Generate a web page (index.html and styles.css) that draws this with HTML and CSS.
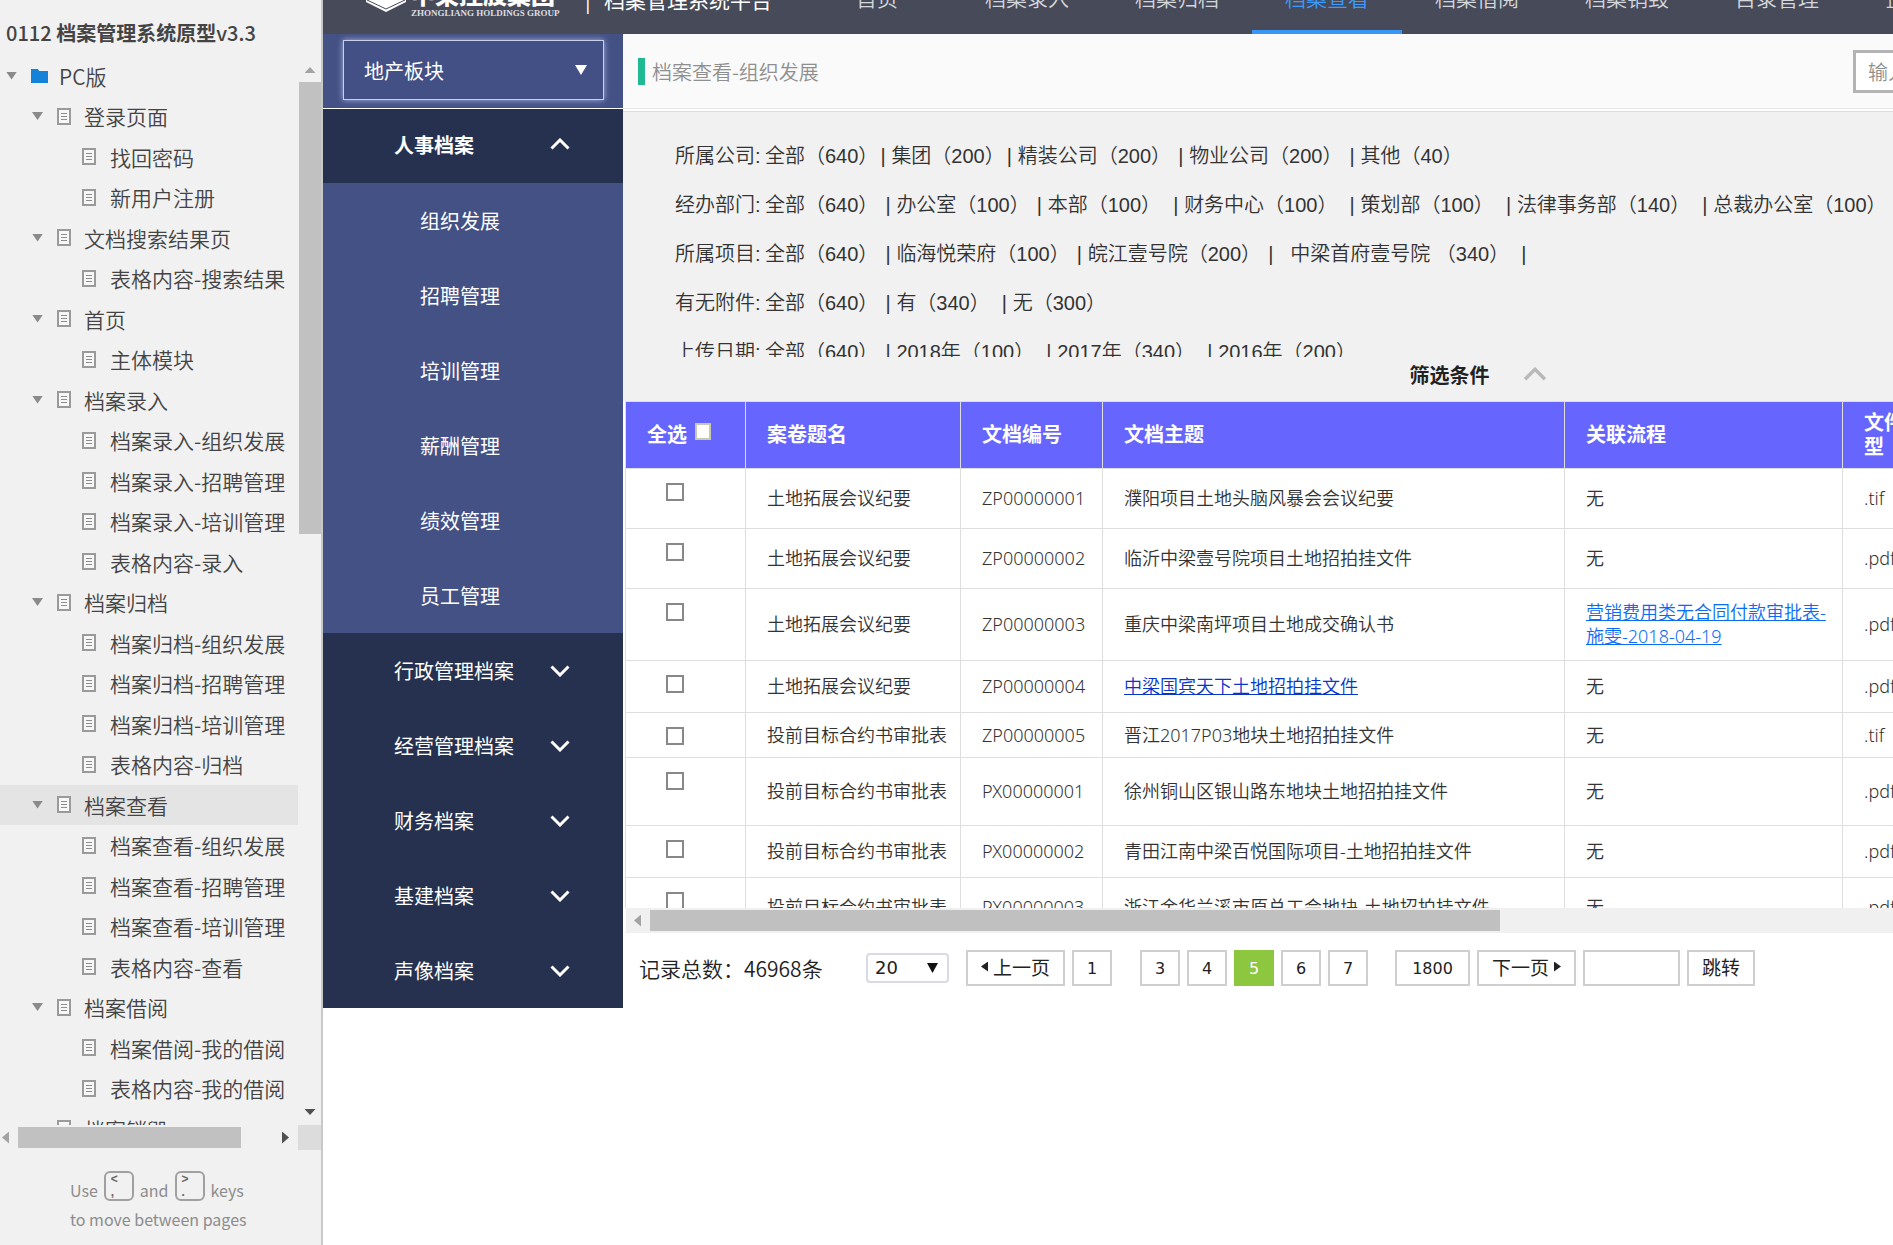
FILE: index.html
```html
<!DOCTYPE html>
<html lang="zh-CN">
<head>
<meta charset="utf-8">
<title>0112 档案管理系统原型v3.3</title>
<link rel="stylesheet" href="styles.css">
</head>
<body>
<svg class="defs" aria-hidden="true">
  <symbol id="doc" viewBox="0 0 14 17"><path d="M1 1h12v15H1z" fill="#f7f7f7" stroke="#9a9a9a" stroke-width="2"/><path d="M4 5.500h6M4 8.500h6M4 11.500h6" stroke="#8c8c8c" stroke-width="1"/></symbol>
  <symbol id="folder" viewBox="0 0 17 14"><path d="M0 0h7l1 2h9v12H0z" fill="#1482d8"/></symbol>
  <symbol id="down" viewBox="0 0 20 12"><path d="M1.500 1.500L10 10l8.500-8.500" fill="none" stroke="currentColor" stroke-width="3"/></symbol>
  <symbol id="up" viewBox="0 0 20 12"><path d="M1.500 10.500L10 2l8.500 8.500" fill="none" stroke="currentColor" stroke-width="3"/></symbol>
</svg>

<aside class="sitemap">
  <h1 class="sitemap-title"><span class="light">0112</span> 档案管理系统原型<span class="light">v3.3</span></h1>
  <div class="tree-area">
    <ul class="tree">
      <li class="l0"><i class="tri"></i><svg class="folder"><use href="#folder"/></svg>PC版</li>
      <li class="l1"><i class="tri"></i><svg class="doc"><use href="#doc"/></svg>登录页面</li>
      <li class="l2"><svg class="doc"><use href="#doc"/></svg>找回密码</li>
      <li class="l2"><svg class="doc"><use href="#doc"/></svg>新用户注册</li>
      <li class="l1"><i class="tri"></i><svg class="doc"><use href="#doc"/></svg>文档搜索结果页</li>
      <li class="l2"><svg class="doc"><use href="#doc"/></svg>表格内容-搜索结果</li>
      <li class="l1"><i class="tri"></i><svg class="doc"><use href="#doc"/></svg>首页</li>
      <li class="l2"><svg class="doc"><use href="#doc"/></svg>主体模块</li>
      <li class="l1"><i class="tri"></i><svg class="doc"><use href="#doc"/></svg>档案录入</li>
      <li class="l2"><svg class="doc"><use href="#doc"/></svg>档案录入-组织发展</li>
      <li class="l2"><svg class="doc"><use href="#doc"/></svg>档案录入-招聘管理</li>
      <li class="l2"><svg class="doc"><use href="#doc"/></svg>档案录入-培训管理</li>
      <li class="l2"><svg class="doc"><use href="#doc"/></svg>表格内容-录入</li>
      <li class="l1"><i class="tri"></i><svg class="doc"><use href="#doc"/></svg>档案归档</li>
      <li class="l2"><svg class="doc"><use href="#doc"/></svg>档案归档-组织发展</li>
      <li class="l2"><svg class="doc"><use href="#doc"/></svg>档案归档-招聘管理</li>
      <li class="l2"><svg class="doc"><use href="#doc"/></svg>档案归档-培训管理</li>
      <li class="l2"><svg class="doc"><use href="#doc"/></svg>表格内容-归档</li>
      <li class="l1 current"><i class="tri"></i><svg class="doc"><use href="#doc"/></svg>档案查看</li>
      <li class="l2"><svg class="doc"><use href="#doc"/></svg>档案查看-组织发展</li>
      <li class="l2"><svg class="doc"><use href="#doc"/></svg>档案查看-招聘管理</li>
      <li class="l2"><svg class="doc"><use href="#doc"/></svg>档案查看-培训管理</li>
      <li class="l2"><svg class="doc"><use href="#doc"/></svg>表格内容-查看</li>
      <li class="l1"><i class="tri"></i><svg class="doc"><use href="#doc"/></svg>档案借阅</li>
      <li class="l2"><svg class="doc"><use href="#doc"/></svg>档案借阅-我的借阅</li>
      <li class="l2"><svg class="doc"><use href="#doc"/></svg>表格内容-我的借阅</li>
      <li class="l1"><i class="tri"></i><svg class="doc"><use href="#doc"/></svg>档案销毁</li>
    </ul>
    <div class="vbar"><i class="arrow-up"></i><div class="vthumb"></div><i class="arrow-down"></i></div>
  </div>
  <div class="hrow">
    <div class="hbar"><i class="arrow-left"></i><div class="hthumb"></div><i class="arrow-right"></i></div>
    <div class="corner"></div>
  </div>
  <footer class="hint">
    <p>Use <kbd><b>&lt;</b><b>,</b></kbd> and <kbd><b>&gt;</b><b>.</b></kbd> keys</p>
    <p>to move between pages</p>
  </footer>
</aside>

<div class="app">
  <header class="topbar">
    <div class="brand">
      <svg class="logo" viewBox="0 0 40 44"><path d="M0 0h40v34L20 44 0 34z" fill="#fff"/><path d="M1 32l19 9 19-9" fill="none" stroke="#474b59" stroke-width="1"/><path d="M7 24v7h11v-3M33 24v7H22v-3" fill="none" stroke="#474b59" stroke-width="2"/></svg>
      <div class="brand-name"><strong>中梁控股集团</strong><small>ZHONGLIANG HOLDINGS GROUP</small></div>
      <span class="divider">|</span>
      <span class="system">档案管理系统平台</span>
    </div>
    <nav class="nav">
      <a href="#">首页</a><a href="#">档案录入</a><a href="#">档案归档</a><a href="#" class="active">档案查看</a><a href="#">档案借阅</a><a href="#">档案销毁</a><a href="#">目录管理</a><a href="#">企业管理</a>
    </nav>
  </header>

  <div class="body">
    <aside class="menu">
      <div class="sector">
        <select aria-label="板块"><option>地产板块</option></select>
        <i class="caret"></i>
      </div>
      <button class="group open">人事档案<svg class="chev"><use href="#up"/></svg></button>
      <div class="sub">
        <a href="#">组织发展</a><a href="#">招聘管理</a><a href="#">培训管理</a><a href="#">薪酬管理</a><a href="#">绩效管理</a><a href="#">员工管理</a>
      </div>
      <button class="group">行政管理档案<svg class="chev"><use href="#down"/></svg></button>
      <button class="group">经营管理档案<svg class="chev"><use href="#down"/></svg></button>
      <button class="group">财务档案<svg class="chev"><use href="#down"/></svg></button>
      <button class="group">基建档案<svg class="chev"><use href="#down"/></svg></button>
      <button class="group">声像档案<svg class="chev"><use href="#down"/></svg></button>
    </aside>

    <main class="main">
      <div class="workspace">
        <div class="crumb">
          <h2>档案查看-组织发展</h2>
          <input type="text" class="search" placeholder="输入关键字" aria-label="搜索">
        </div>
        <section class="filters">
          <div class="filter-list">
            <p><b>所属公司:</b><span>全部（640）</span><i class="s">|</i><span>集团（200）</span><i class="s">|</i><span>精装公司（200）</span><i>|</i><span>物业公司（200）</span><i>|</i><span>其他（40）</span></p>
            <p><b>经办部门:</b><span>全部（640）</span><i>|</i><span>办公室（100）</span><i>|</i><span>本部（100）</span><i class="l">|</i><span>财务中心（100）</span><i class="l">|</i><span>策划部（100）</span><i class="l">|</i><span>法律事务部（140）</span><i class="l">|</i><span>总裁办公室（100）</span></p>
            <p><b>所属项目:</b><span>全部（640）</span><i>|</i><span>临海悦荣府（100）</span><i>|</i><span>皖江壹号院（200）</span><i>|</i><span>&nbsp; 中梁首府壹号院 （340）</span><i class="l">|</i></p>
            <p><b>有无附件:</b><span>全部（640）</span><i>|</i><span>有（340）</span><i class="l">|</i><span>无（300）</span></p>
            <p><b>上传日期:</b><span>全部（640）</span><i>|</i><span>2018年（100）</span><i class="l">|</i><span>2017年（340）</span><i class="l">|</i><span>2016年（200）</span></p>
          </div>
          <button class="toggle">筛选条件<svg class="chev-lg"><use href="#up"/></svg></button>
        </section>
        <div class="table-wrap">
          <table>
            <colgroup><col class="c-check"><col class="c-title"><col class="c-no"><col class="c-subject"><col class="c-flow"><col class="c-type"></colgroup>
            <thead><tr><th><label>全选 <input type="checkbox"></label></th><th>案卷题名</th><th>文档编号</th><th>文档主题</th><th>关联流程</th><th>文件类型</th></tr></thead>
            <tbody>
              <tr class="h60"><td><input type="checkbox" aria-label="选择"></td><td>土地拓展会议纪要</td><td>ZP00000001</td><td>濮阳项目土地头脑风暴会会议纪要</td><td>无</td><td>.tif</td></tr>
              <tr class="h60"><td><input type="checkbox" aria-label="选择"></td><td>土地拓展会议纪要</td><td>ZP00000002</td><td>临沂中梁壹号院项目土地招拍挂文件</td><td>无</td><td>.pdf</td></tr>
              <tr class="h72"><td><input type="checkbox" aria-label="选择"></td><td>土地拓展会议纪要</td><td>ZP00000003</td><td>重庆中梁南坪项目土地成交确认书</td><td><a href="#" class="flow">营销费用类无合同付款审批表-<br>施雯-2018-04-19</a></td><td>.pdf</td></tr>
              <tr class="h52"><td><input type="checkbox" aria-label="选择"></td><td>土地拓展会议纪要</td><td>ZP00000004</td><td><a href="#">中梁国宾天下土地招拍挂文件</a></td><td>无</td><td>.pdf</td></tr>
              <tr class="h45"><td><input type="checkbox" aria-label="选择"></td><td>投前目标合约书审批表</td><td>ZP00000005</td><td>晋江2017P03地块土地招拍挂文件</td><td>无</td><td>.tif</td></tr>
              <tr class="h68"><td><input type="checkbox" aria-label="选择"></td><td>投前目标合约书审批表</td><td>PX00000001</td><td>徐州铜山区银山路东地块土地招拍挂文件</td><td>无</td><td>.pdf</td></tr>
              <tr class="h52"><td><input type="checkbox" aria-label="选择"></td><td>投前目标合约书审批表</td><td>PX00000002</td><td>青田江南中梁百悦国际项目-土地招拍挂文件</td><td>无</td><td>.pdf</td></tr>
              <tr class="h60"><td><input type="checkbox" aria-label="选择"></td><td>投前目标合约书审批表</td><td>PX00000003</td><td>浙江金华兰溪市原总工会地块-土地招拍挂文件</td><td>无</td><td>.pdf</td></tr>
            </tbody>
          </table>
        </div>
        <div class="table-bar"><i class="arrow-left"></i><div class="table-thumb"></div></div>
        <div class="pager">
          <span class="total">记录总数：46968条</span>
          <span class="size"><select aria-label="每页条数"><option>20</option></select><i class="size-caret"></i></span>
          <button class="step"><i class="mini-left"></i>上一页</button>
          <button class="num first">1</button>
          <button class="num">3</button><button class="num">4</button><button class="num on">5</button><button class="num">6</button><button class="num last">7</button>
          <button class="num wide">1800</button>
          <button class="step">下一页<i class="mini-right"></i></button>
          <input type="text" class="goto" aria-label="页码">
          <button class="jump">跳转</button>
        </div>
      </div>
    </main>
  </div>
</div>
</body>
</html>
```
FILE: styles.css
```css
* { box-sizing: border-box; }
body { margin: 0; height: 100vh; display: flex; overflow: hidden; background: #fff; color: #222; font-family: "Noto Sans CJK SC", sans-serif; font-size: 18px; }
h1, h2, p, ul { margin: 0; padding: 0; }
button, input, select { font: inherit; color: inherit; margin: 0; border-radius: 0; }
a { color: inherit; text-decoration: none; }
i { font-style: normal; }
.defs { display: none; }

/* page tree */
.sitemap { flex: none; width: 323px; display: flex; flex-direction: column; background: #f1f1f1; border-right: 2px solid #c8c8c8; color: #444; }
.sitemap-title { height: 56px; padding: 10px 0 0 6px; font-size: 20px; line-height: 46px; font-weight: 700; white-space: nowrap; }
.light { font-weight: 500; }
.tree-area { flex: 1; min-height: 0; display: flex; overflow: hidden; }
.tree { flex: 1; min-width: 0; list-style: none; overflow: hidden; font-size: 21px; line-height: 30px; font-weight: 350; }
.tree li { display: flex; align-items: center; height: 40px; padding-bottom: 1px; white-space: nowrap; }
.tree li:nth-child(even) { height: 41px; }
.tree .current { background: #e4e4e4; }
.l0 { padding-left: 6px; }
.l1 { padding-left: 32px; }
.l2 { padding-left: 82px; }
.tri { width: 11px; height: 8px; margin-right: 14px; background: #8a8a8a; clip-path: polygon(0 0, 100% 0, 50% 100%); }
.doc { width: 14px; height: 17px; margin-right: 14px; }
.l1 .doc { margin-right: 13px; }
.folder { width: 17px; height: 14px; margin-right: 11px; }
.vbar { width: 23px; display: flex; flex-direction: column; align-items: center; padding: 11px 0 10px 1px; }
.vthumb { width: 22px; height: 452px; margin: 9px 0 auto; background: #c1c1c1; }
.arrow-up { width: 11px; height: 6px; background: #a3a3a3; clip-path: polygon(50% 0, 100% 100%, 0 100%); }
.arrow-down { width: 11px; height: 6px; background: #505050; clip-path: polygon(0 0, 100% 0, 50% 100%); }
.arrow-left { flex: none; width: 7px; height: 12px; background: #a3a3a3; clip-path: polygon(0 50%, 100% 0, 100% 100%); }
.arrow-right { width: 7px; height: 12px; background: #505050; clip-path: polygon(0 0, 100% 50%, 0 100%); }
.hrow { display: flex; height: 25px; }
.hbar { flex: 1; display: flex; align-items: center; padding: 0 9px 0 2px; }
.hthumb { width: 223px; height: 21px; margin: 0 auto 0 9px; background: #c1c1c1; }
.corner { width: 23px; background: #dcdcdc; }
.hint { height: 95px; padding: 21px 0 0 70px; font-size: 16px; line-height: 29px; color: #8c8c8c; white-space: nowrap; }
.hint p:first-child { display: flex; align-items: flex-end; gap: 6px; height: 34px; }
kbd { width: 30px; height: 30px; margin-bottom: 4px; padding-left: 5px; border: 2px solid #a0a0a0; border-radius: 6px; color: #666; font-family: "Liberation Sans", sans-serif; font-size: 12px; display: flex; flex-direction: column; }
kbd b { height: 13px; line-height: 13px; }

/* application */
.app { flex: 1; min-width: 0; overflow: hidden; }
.topbar { display: flex; height: 70px; margin-top: -36px; background: #474b59; color: #fff; overflow: hidden; }
.brand { flex: none; width: 479px; display: flex; padding-left: 43px; white-space: nowrap; }
.logo { width: 40px; height: 44px; margin: 4px 5px 0 0; }
.brand-name { display: flex; flex-direction: column; width: 160px; padding-top: 17px; }
.brand-name strong { font-size: 24px; line-height: 26px; font-weight: 900; }
.brand-name small { font: 700 9px/12px "Liberation Serif", serif; color: #dcdde2; }
.divider { width: 33px; padding-left: 14px; font-size: 21px; line-height: 70px; }
.system { font-size: 21px; line-height: 70px; }
.nav { display: flex; }
.nav a { flex: none; width: 150px; text-align: center; font-size: 21px; line-height: 66px; font-weight: 350; color: #d5d7dd; border-bottom: 4px solid transparent; }
.nav .active { color: #3b9bff; border-color: #3896f5; }
.body { display: flex; align-items: flex-start; }

/* category menu */
.menu { flex: none; width: 300px; background: #445185; color: #fff; font-size: 20px; }
.sector { position: relative; height: 75px; padding: 6px 19px 8px 20px; border-bottom: 1px solid #fff; }
.sector select { appearance: none; width: 100%; height: 60px; padding: 0 20px; background: #435086; border: 1px solid #c8d0ea; box-shadow: 0 0 6px #a9b4e0; font-size: 20px; color: #fff; }
.caret { position: absolute; right: 36px; top: 31px; width: 12px; height: 10px; background: #fff; clip-path: polygon(0 0, 100% 0, 50% 100%); }
.group { display: flex; align-items: center; justify-content: space-between; width: 100%; height: 75px; padding: 0 53px 0 71px; border: 0; background: #263150; font-size: 20px; color: #fff; }
.open { height: 74px; padding-bottom: 4px; font-weight: 700; }
.chev { width: 20px; height: 12px; }
.sub a { display: block; padding-left: 97px; line-height: 75px; }

/* workspace */
.main { flex: 1; min-width: 0; overflow: hidden; }
.workspace { width: calc(100% + 440px); }
.crumb { display: flex; align-items: center; height: 75px; padding: 1px 0 0 15px; background: #fafafa; border-bottom: 1px solid #e6e6e6; }
.crumb h2 { padding-left: 7px; border-left: 7px solid #1fba92; font-size: 20px; line-height: 27px; font-weight: 350; color: #8f8f8f; }
.search { width: 480px; height: 43px; margin-left: auto; padding: 0 12px; border: 3px solid #b4b4b4; background: #fff; font-size: 20px; font-weight: 350; }
.search::placeholder { color: #8f8f8f; }
.filters { margin-top: 2px; height: 290px; border-top: 1px solid #dcdcdc; background: #f1f1f1; }
.filter-list { height: 245px; padding: 20px 0 0 52px; overflow: hidden; font-family: "Liberation Sans", "Noto Sans CJK SC", sans-serif; font-size: 20px; font-weight: 350; color: #333; }
.filter-list p { display: flex; line-height: 49px; white-space: nowrap; }
.filter-list b { width: 90px; font-weight: 350; }
.filter-list i { width: 18px; padding-left: 7px; }
.filter-list .s { width: 13px; padding-left: 2px; }
.filter-list .l { width: 23px; padding-left: 12px; }
.toggle { display: flex; align-items: center; justify-content: center; gap: 33px; width: 100%; height: 36px; padding: 0 0 2px; border: 0; background: none; font-size: 20px; font-weight: 700; }
.chev-lg { width: 24px; height: 14px; color: #b9b9b9; }

.table-wrap { height: 507px; margin-left: 2px; overflow: hidden; }
table { table-layout: fixed; width: 1328px; border-collapse: collapse; font-family: "Noto Sans", "Noto Sans CJK SC", sans-serif; font-size: 18px; line-height: 24px; font-weight: 350; color: #333; }
.c-check { width: 120px; }
.c-title { width: 215px; }
.c-no { width: 142px; }
.c-subject { width: 462px; }
.c-flow { width: 278px; }
.c-type { width: 111px; }
th, td { padding: 0 0 0 21px; border: 1px solid #dedede; text-align: left; white-space: nowrap; }
th { height: 67px; padding-right: 20px; background: #6666ff; color: #fff; font-size: 20px; font-weight: 700; white-space: normal; }
td { padding-bottom: 1px; }
td:first-child { padding: 14px 0 0 40px; vertical-align: top; }
td a { color: #0a35c8; text-decoration: underline; }
td .flow { color: #0a6cf5; }
table input { appearance: none; width: 18px; height: 18px; border: 2px solid #888; background: #fff; display: block; }
th label { display: flex; gap: 8px; }
th input { width: 16px; height: 17px; border-color: #c9c9b0; }
.h60 { height: 60px; }
.h72 { height: 72px; }
.h52 { height: 52px; }
.h45 { height: 45px; }
.h68 { height: 68px; }
.table-bar { display: flex; align-items: center; height: 25px; margin-left: 3px; padding-left: 8px; background: #f0f0f0; }
.table-thumb { width: 850px; height: 21px; margin-left: 9px; background: #c0c0c0; }

.pager { display: flex; align-items: center; gap: 7px; height: 70px; padding-left: 16px; }
.total { width: 220px; font-size: 21px; font-weight: 350; white-space: nowrap; }
.size { position: relative; width: 83px; margin-right: 10px; }
.size select { appearance: none; display: block; width: 100%; height: 30px; padding: 0 7px; border: 2px solid #d9dae6; border-radius: 4px; background: #fff; font: 18px/24px "DejaVu Sans", sans-serif; }
.size-caret { position: absolute; right: 11px; top: 10px; width: 11px; height: 10px; background: #111; clip-path: polygon(0 0, 100% 0, 50% 100%); }
.pager button, .goto { height: 36px; padding: 0; border: 2px solid #cfcfcf; background: #fff; }
.pager .step { display: flex; align-items: center; justify-content: center; gap: 5px; width: 99px; padding-bottom: 3px; font-size: 19px; }
.mini-left { width: 7px; height: 10px; background: #222; clip-path: polygon(0 50%, 100% 0, 100% 100%); }
.mini-right { width: 7px; height: 10px; background: #222; clip-path: polygon(0 0, 100% 50%, 0 100%); }
.pager .num { width: 40px; font: 16px "DejaVu Sans", sans-serif; }
.pager .first { margin-right: 21px; }
.pager .last { margin-right: 20px; }
.pager .wide { width: 75px; }
.pager .on { background: #8dc63f; border-color: #8dc63f; color: #fff; }
.goto { width: 97px; }
.pager .jump { width: 68px; padding-bottom: 3px; font-size: 19px; }
```
